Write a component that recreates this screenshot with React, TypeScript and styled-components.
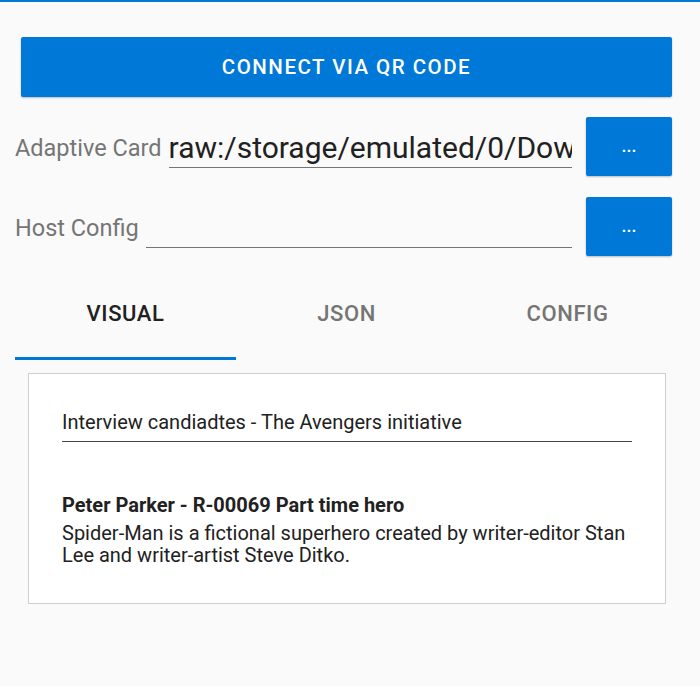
import React, { useState } from "react";
import styled, { createGlobalStyle } from "styled-components";

const GlobalStyle = createGlobalStyle`
  body {
    margin: 0;
    background: #fafafa;
    font-family: Roboto, "Liberation Sans", sans-serif;
  }
`;

const Page = styled.div`
  border-top: 2px solid #0078d7;
  padding: 35px 28px 0 15px;
  min-height: 686px;
  box-sizing: border-box;
`;

const BlueButton = styled.button`
  background: #0078d7;
  color: white;
  border: none;
  border-radius: 2px;
  box-shadow: 0 1px 2px rgba(0, 0, 0, 0.25);
  font-family: Roboto, "Liberation Sans", sans-serif;
  font-weight: 500;
  text-transform: uppercase;
  cursor: pointer;
`;

const ConnectButton = styled(BlueButton)`
  display: block;
  width: calc(100% - 6px);
  margin-left: 6px;
  height: 60px;
  font-size: 20.5px;
  letter-spacing: 1.5px;
`;

const DotsButton = styled(BlueButton)`
  width: 86px;
  height: 59px;
  flex-shrink: 0;
  font-size: 18px;
  padding-bottom: 4px;
`;

const Row = styled.div<{ $top: number }>`
  display: flex;
  align-items: flex-start;
  margin-top: ${(p) => p.$top}px;
  height: 59px;
`;

const Label = styled.label`
  font-size: 23.5px;
  color: #757575;
  align-self: center;
  white-space: nowrap;
  padding-top: 3px;
`;

const Field = styled.input<{ $gap: number }>`
  flex: 1;
  min-width: 0;
  height: 51px;
  box-sizing: border-box;
  margin: 0 14px 0 ${(p) => p.$gap}px;
  padding: 10px 0 0 0;
  border: none;
  border-bottom: 1px solid #757575;
  background: transparent;
  font-family: Roboto, "Liberation Sans", sans-serif;
  font-size: 30px;
  color: #212121;
  outline: none;
`;

const Tabs = styled.div`
  display: grid;
  grid-template-columns: repeat(3, 221px);
  margin-top: 14px;
`;

const Tab = styled.div<{ $active: boolean }>`
  height: 90px;
  box-sizing: border-box;
  display: flex;
  align-items: center;
  justify-content: center;
  font-size: 22px;
  font-weight: 500;
  letter-spacing: 0.6px;
  color: ${(p) => (p.$active ? "#212121" : "#757575")};
  border-bottom: 3px solid ${(p) => (p.$active ? "#0078d7" : "transparent")};
  cursor: pointer;
`;

const Card = styled.div`
  margin: 13px 6px 0 13px;
  background: #fff;
  border: 1px solid #cfcfcf;
  padding: 37px 33px 37px 33px;
  color: #212121;
  font-size: 20px;
  line-height: 22px;
`;

const CardTitle = styled.div`
  padding-bottom: 8px;
  border-bottom: 1px solid #444;
`;

const Heading = styled.div`
  margin-top: 52px;
  font-weight: 700;
`;

const Body = styled.div`
  margin-top: 6px;
`;

const tabs = ["Visual", "JSON", "Config"];

export default function App() {
  const [active, setActive] = useState(0);
  return (
    <>
      <GlobalStyle />
      <Page>
        <ConnectButton>Connect via QR code</ConnectButton>
        <Row $top={20}>
          <Label>Adaptive Card</Label>
          <Field $gap={7} readOnly value="raw:/storage/emulated/0/Download/card.json" />
          <DotsButton>...</DotsButton>
        </Row>
        <Row $top={21}>
          <Label>Host Config</Label>
          <Field $gap={7} readOnly value="" />
          <DotsButton>...</DotsButton>
        </Row>
        <Tabs>
          {tabs.map((t, i) => (
            <Tab key={t} $active={i === active} onClick={() => setActive(i)}>
              {t.toUpperCase()}
            </Tab>
          ))}
        </Tabs>
        <Card>
          <CardTitle>Interview candiadtes - The Avengers initiative</CardTitle>
          <Heading>Peter Parker - R-00069 Part time hero</Heading>
          <Body>
            Spider-Man is a fictional superhero created by writer-editor Stan Lee and
            writer-artist Steve Ditko.
          </Body>
        </Card>
      </Page>
    </>
  );
}
